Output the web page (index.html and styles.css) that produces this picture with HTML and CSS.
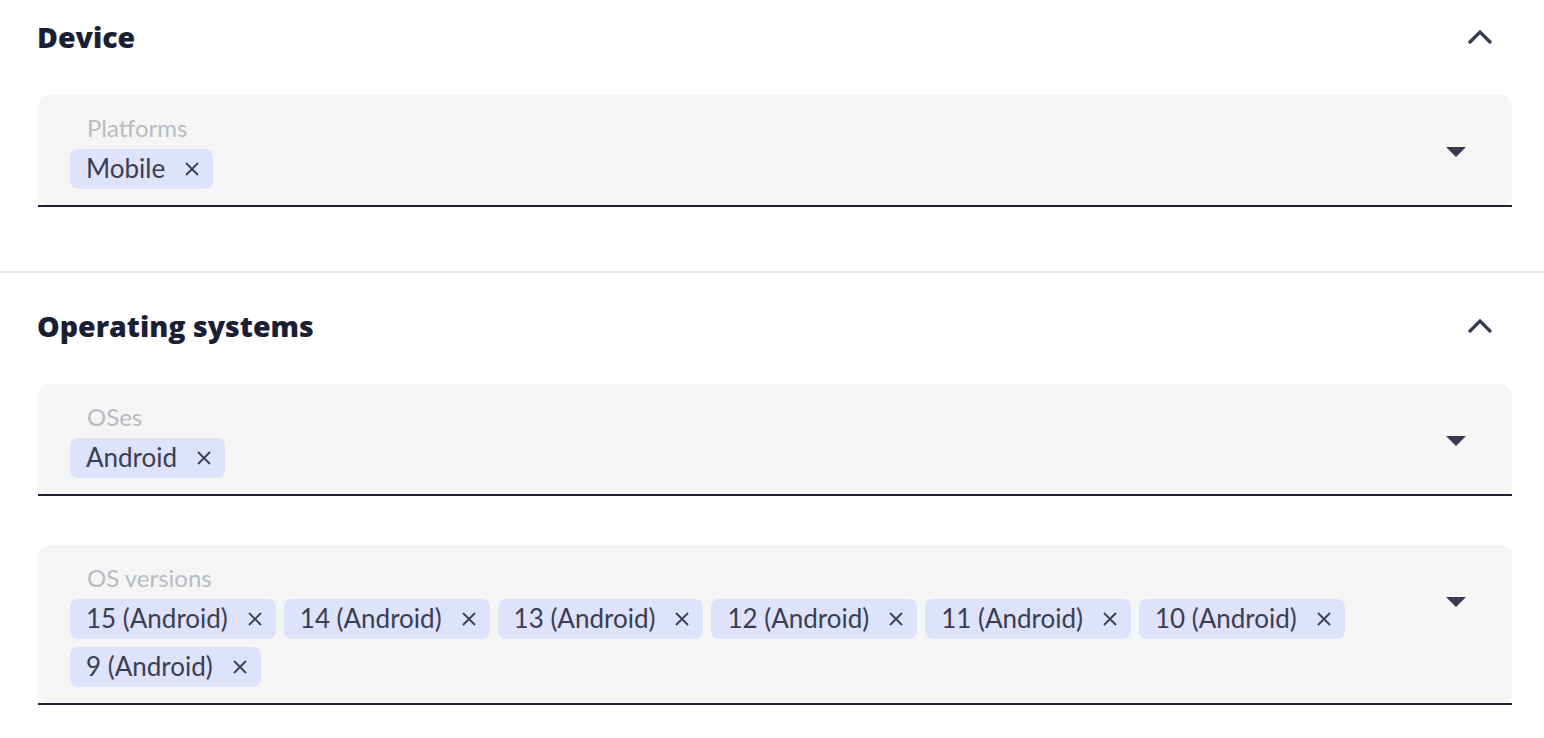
FILE: index.html
```html
<!DOCTYPE html>
<html lang="en">
<head>
<meta charset="utf-8">
<title>Filters</title>
<link rel="stylesheet" href="styles.css">
</head>
<body>
<div class="panel">
  <section class="section first">
    <div class="section-head">
      <h2 class="section-title">Device</h2>
      <svg class="chevron" width="26" height="16" viewBox="0 0 26 16"><path d="M2 14 L13 3 L24 14" fill="none" stroke="#363b51" stroke-width="3.2"/></svg>
    </div>
    <div class="field">
      <div class="field-body">
        <div class="field-label">Platforms</div>
        <div class="chips">
          <span class="chip">Mobile<span class="chip-x"><svg width="14" height="14" viewBox="0 0 14 14"><path d="M1 1 L13 13 M13 1 L1 13" stroke="#3b3f53" stroke-width="1.8"/></svg></span></span>
        </div>
      </div>
      <span class="caret"></span>
    </div>
  </section>
  <section class="section">
    <div class="section-head">
      <h2 class="section-title">Operating systems</h2>
      <svg class="chevron" width="26" height="16" viewBox="0 0 26 16"><path d="M2 14 L13 3 L24 14" fill="none" stroke="#363b51" stroke-width="3.2"/></svg>
    </div>
    <div class="field">
      <div class="field-body">
        <div class="field-label">OSes</div>
        <div class="chips">
          <span class="chip">Android<span class="chip-x"><svg width="14" height="14" viewBox="0 0 14 14"><path d="M1 1 L13 13 M13 1 L1 13" stroke="#3b3f53" stroke-width="1.8"/></svg></span></span>
        </div>
      </div>
      <span class="caret"></span>
    </div>
    <div class="field">
      <div class="field-body">
        <div class="field-label">OS versions</div>
        <div class="chips">
          <span class="chip">15 (Android)<span class="chip-x"><svg width="14" height="14" viewBox="0 0 14 14"><path d="M1 1 L13 13 M13 1 L1 13" stroke="#3b3f53" stroke-width="1.8"/></svg></span></span>
          <span class="chip">14 (Android)<span class="chip-x"><svg width="14" height="14" viewBox="0 0 14 14"><path d="M1 1 L13 13 M13 1 L1 13" stroke="#3b3f53" stroke-width="1.8"/></svg></span></span>
          <span class="chip">13 (Android)<span class="chip-x"><svg width="14" height="14" viewBox="0 0 14 14"><path d="M1 1 L13 13 M13 1 L1 13" stroke="#3b3f53" stroke-width="1.8"/></svg></span></span>
          <span class="chip">12 (Android)<span class="chip-x"><svg width="14" height="14" viewBox="0 0 14 14"><path d="M1 1 L13 13 M13 1 L1 13" stroke="#3b3f53" stroke-width="1.8"/></svg></span></span>
          <span class="chip">11 (Android)<span class="chip-x"><svg width="14" height="14" viewBox="0 0 14 14"><path d="M1 1 L13 13 M13 1 L1 13" stroke="#3b3f53" stroke-width="1.8"/></svg></span></span>
          <span class="chip">10 (Android)<span class="chip-x"><svg width="14" height="14" viewBox="0 0 14 14"><path d="M1 1 L13 13 M13 1 L1 13" stroke="#3b3f53" stroke-width="1.8"/></svg></span></span>
          <span class="chip">9 (Android)<span class="chip-x"><svg width="14" height="14" viewBox="0 0 14 14"><path d="M1 1 L13 13 M13 1 L1 13" stroke="#3b3f53" stroke-width="1.8"/></svg></span></span>
        </div>
      </div>
      <span class="caret"></span>
    </div>
  </section>
</div>
</body>
</html>
```

FILE: styles.css
```css
* { box-sizing: border-box; }

html, body {
  margin: 0;
  padding: 0;
  background: #ffffff;
}

body {
  font-family: Lato, "Liberation Sans", sans-serif;
  color: #1b1f36;
}

.panel {
  display: flex;
  flex-direction: column;
}

.section {
  display: flex;
  flex-direction: column;
  gap: 49px;
  padding: 35px 32px 48px 37px;
  border-bottom: 2px solid #e7e7e7;
}

.section.first {
  padding-top: 19px;
  padding-bottom: 64px;
}

.section-head {
  display: flex;
  align-items: center;
  justify-content: space-between;
  height: 36px;
  padding-right: 19px;
  margin-bottom: -9px;
}

.section-title {
  margin: 0;
  font-family: "Open Sans", Lato, sans-serif;
  font-size: 28.5px;
  line-height: 36px;
  font-weight: 800;
  color: #1b1f36;
  letter-spacing: 0;
}

.chevron {
  display: block;
}

.field {
  display: flex;
  align-items: flex-start;
  margin-left: 1px;
  background: #f5f5f5;
  border-radius: 12px;
  padding: 18px 46px 18px 32px;
  position: relative;
}

.field::after {
  content: "";
  position: absolute;
  left: 0;
  right: 0;
  bottom: 0;
  height: 2px;
  background: #1f2135;
}

.field-body {
  flex: 1;
  display: flex;
  flex-direction: column;
  gap: 6px;
}

.field-label {
  padding-left: 17px;
  font-size: 24px;
  line-height: 30px;
  color: #b8bbc2;
}

.chips {
  display: flex;
  flex-wrap: wrap;
  gap: 8px;
  padding-right: 90px;
}

.chip {
  display: inline-flex;
  align-items: center;
  height: 40px;
  padding: 0 14px 2px 16px;
  background: #dee2fb;
  border-radius: 8px;
  font-size: 26px;
  line-height: 38px;
  color: #3a3e52;
}

.chip-x {
  display: inline-flex;
  margin-left: 20px;
  margin-top: 2px;
}

.chip-x svg { display: block; }

.caret {
  margin-top: 34px;
  width: 0;
  height: 0;
  border-left: 10px solid transparent;
  border-right: 10px solid transparent;
  border-top: 10px solid #363b51;
}
```
